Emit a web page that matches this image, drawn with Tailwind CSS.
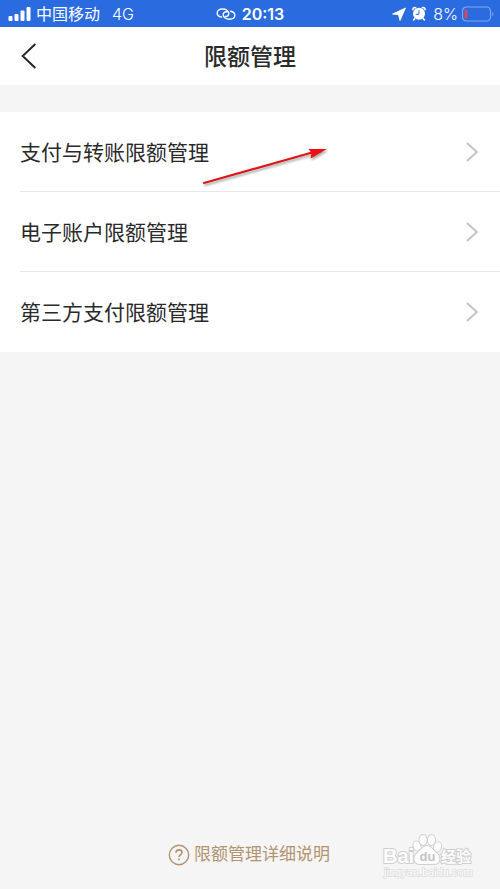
<!DOCTYPE html>
<html lang="zh-CN">
<head>
<meta charset="utf-8">
<meta name="viewport" content="width=device-width, initial-scale=1">
<title>限额管理</title>
<script src="https://cdn.jsdelivr.net/npm/@tailwindcss/browser@4"></script>
</head>
<body class="relative flex min-h-screen flex-col bg-[#f5f5f5] font-['Liberation_Sans','Noto_Sans_CJK_SC',sans-serif] text-[#2a2a2a]">
  <div class="grid h-[27px] grid-cols-[1fr_auto_1fr] items-center bg-[#2a6be0] px-2 text-white">
    <div class="flex items-center text-base leading-6">
      <svg class="mr-1 h-4 w-6" viewBox="0 0 24 16" fill="currentColor" aria-hidden="true">
        <rect x="0.5" y="10" width="4" height="5" rx="1"/><rect x="6.5" y="8" width="4" height="7" rx="1"/><rect x="12.5" y="4.500" width="4" height="10.500" rx="1"/><rect x="18.500" y="1" width="4" height="14" rx="1"/>
      </svg>
      <span class="pt-0.5">中国移动</span>
      <span class="ml-3 font-[Inter] font-light">4G</span>
    </div>
    <div class="flex items-center gap-1.5">
      <svg class="h-4 w-5" viewBox="0 0 20 16" fill="none" stroke="currentColor" stroke-width="1.400" stroke-linecap="round" aria-hidden="true">
        <path d="M5.500 11C2.800 10.600 1.200 9 1.200 6.900C1.200 4.500 3.500 3 6.500 3C10 3 12.800 4.900 12.800 7.500C12.800 9.500 11.200 10.700 9 10.500"/>
        <path d="M14.500 5.200C17.200 5.600 18.800 7.200 18.800 9.300C18.800 11.700 16.500 13.200 13.500 13.200C10 13.200 7.200 11.300 7.200 8.700C7.200 6.700 8.800 5.500 11 5.700"/>
      </svg>
      <span class="font-[Inter] text-base leading-6 font-semibold">20:13</span>
    </div>
    <div class="flex items-center justify-end">
      <svg class="mr-1 h-4 w-4" viewBox="0 0 16 16" fill="currentColor" aria-hidden="true"><path d="M14.500 2L9 14.500L7.500 8.700L1.500 8Z" stroke="currentColor" stroke-width="0.800" stroke-linejoin="round"/></svg>
      <svg class="mr-1 h-4 w-4" viewBox="0 0 16 16" aria-hidden="true">
        <circle cx="8" cy="7.800" r="6" fill="currentColor"/>
        <path d="M1.900 3.800C1.900 2 3 1.300 4.600 1.700M14.100 3.800C14.100 2 13 1.300 11.400 1.700M3.800 12.500L2.600 14M12.200 12.500L13.400 14" fill="none" stroke="currentColor" stroke-width="1.600" stroke-linecap="round"/>
        <path d="M8 4.300V8.300H4.800" fill="none" stroke="#2a6be0" stroke-width="1"/>
      </svg>
      <span class="mr-1 ml-0.5 font-[Inter] text-base leading-6 font-light">8%</span>
      <svg class="-mr-0.5 h-4 w-8" viewBox="0 0 32 16" fill="none" aria-hidden="true">
        <rect x="0.5" y="1" width="28" height="14" rx="4" stroke="#82a9ef" stroke-width="1.200"/>
        <path d="M30.300 5.500C31.700 6.500 31.700 9.500 30.300 10.500Z" fill="#82a9ef"/>
        <rect x="2.500" y="3.500" width="3" height="9" rx="1.200" fill="#d9485a"/>
      </svg>
    </div>
  </div>

  <header class="grid h-[58px] grid-cols-[1fr_auto_1fr] items-center bg-white px-5">
    <button type="button" aria-label="返回" class="flex h-8 w-5 items-center">
      <svg class="h-7 w-5" viewBox="0 0 20 28" fill="none" stroke="#222" stroke-width="1.900" stroke-linecap="round" aria-hidden="true"><path d="M14.800 2.500L2.700 14L14.800 25.500"/></svg>
    </button>
    <h1 class="pt-0.5 text-[23px] leading-8 font-medium">限额管理</h1>
  </header>

  <main class="relative mt-[27px] bg-white pl-5">
    <nav aria-label="限额管理">
      <a href="#transfer" class="flex h-20 items-center justify-between border-b border-[#e8e8e8] pr-5 text-[21px] leading-8">
        <span class="pt-0.5">支付与转账限额管理</span>
        <svg class="h-6 w-4" viewBox="0 0 16 24" fill="none" stroke="#c4c4c4" stroke-width="2" aria-hidden="true"><path d="M3 3L12.800 12L3 21"/></svg>
      </a>
      <a href="#account" class="flex h-20 items-center justify-between border-b border-[#e8e8e8] pr-5 text-[21px] leading-8">
        <span class="pt-0.5">电子账户限额管理</span>
        <svg class="h-6 w-4" viewBox="0 0 16 24" fill="none" stroke="#c4c4c4" stroke-width="2" aria-hidden="true"><path d="M3 3L12.800 12L3 21"/></svg>
      </a>
      <a href="#third-party" class="flex h-20 items-center justify-between pr-5 text-[21px] leading-8">
        <span class="pt-0.5">第三方支付限额管理</span>
        <svg class="h-6 w-4" viewBox="0 0 16 24" fill="none" stroke="#c4c4c4" stroke-width="2" aria-hidden="true"><path d="M3 3L12.800 12L3 21"/></svg>
      </a>
    </nav>
    <svg class="pointer-events-none absolute top-7 left-[200px] h-[52px] w-[136px] drop-shadow-[1px_2px_1px_rgba(0,0,0,0.35)]" viewBox="0 0 136 52" aria-hidden="true">
      <path d="M4 43L112 12.500" stroke="#e01515" stroke-width="2.200" stroke-linecap="round"/>
      <path d="M127 9L108.500 9L111.500 12.700L110.500 18.500Z" fill="#ee1010"/>
    </svg>
  </main>

  <footer class="mt-auto flex justify-center pb-[22px]">
    <a href="#details" class="flex items-center gap-1 pr-0.5 text-[17px] leading-6 text-[#b39470]">
      <svg class="h-[22px] w-[22px]" viewBox="0 0 22 22" fill="none" stroke="currentColor" aria-hidden="true">
        <circle cx="11" cy="11" r="9.700" stroke-width="1.400"/>
        <path d="M8 8.800C8 6.900 9.200 5.900 11 5.900C12.800 5.900 14 7 14 8.500C14 10.500 11 10.700 11 13" stroke-width="1.600"/>
        <path d="M11 14.400V16.200" stroke-width="1.800"/>
      </svg>
      <span>限额管理详细说明</span>
    </a>
  </footer>

  <svg class="pointer-events-none absolute right-5 bottom-2 h-12 w-[100px]" viewBox="0 0 100 48" role="img" aria-label="Baidu 经验">
    <g fill="#fdfdfd" stroke="#cfcfcf" stroke-width="2" paint-order="stroke" font-family="'Liberation Sans','Noto Sans CJK SC',sans-serif" font-weight="700">
      <text x="3" y="30" font-size="20">Bai</text>
      <text x="61" y="29" font-size="15">经验</text>
      <g stroke-width="2">
        <ellipse cx="37" cy="13" rx="3.400" ry="4.700" transform="rotate(-20 37 13)"/>
        <ellipse cx="43" cy="7" rx="3.600" ry="5"/>
        <ellipse cx="51.500" cy="7" rx="3.600" ry="5"/>
        <ellipse cx="57.500" cy="14" rx="3.400" ry="4.700" transform="rotate(20 57.500 14)"/>
        <path d="M47 13C42.500 13 41 17.500 37 20.500C32.500 24.500 34 31 40 31C43.500 31 50 31 54 31C60 31 61 24.500 57 20.500C53 17.500 51.500 13 47 13Z"/>
      </g>
      <text x="39.500" y="28" font-size="13" fill="#c4c4c4" stroke="none">du</text>
      <text x="4" y="43" font-size="11" font-weight="400" stroke="#dcdcdc" stroke-width="1.400">jingyan.baidu.com</text>
    </g>
  </svg>
</body>
</html>
